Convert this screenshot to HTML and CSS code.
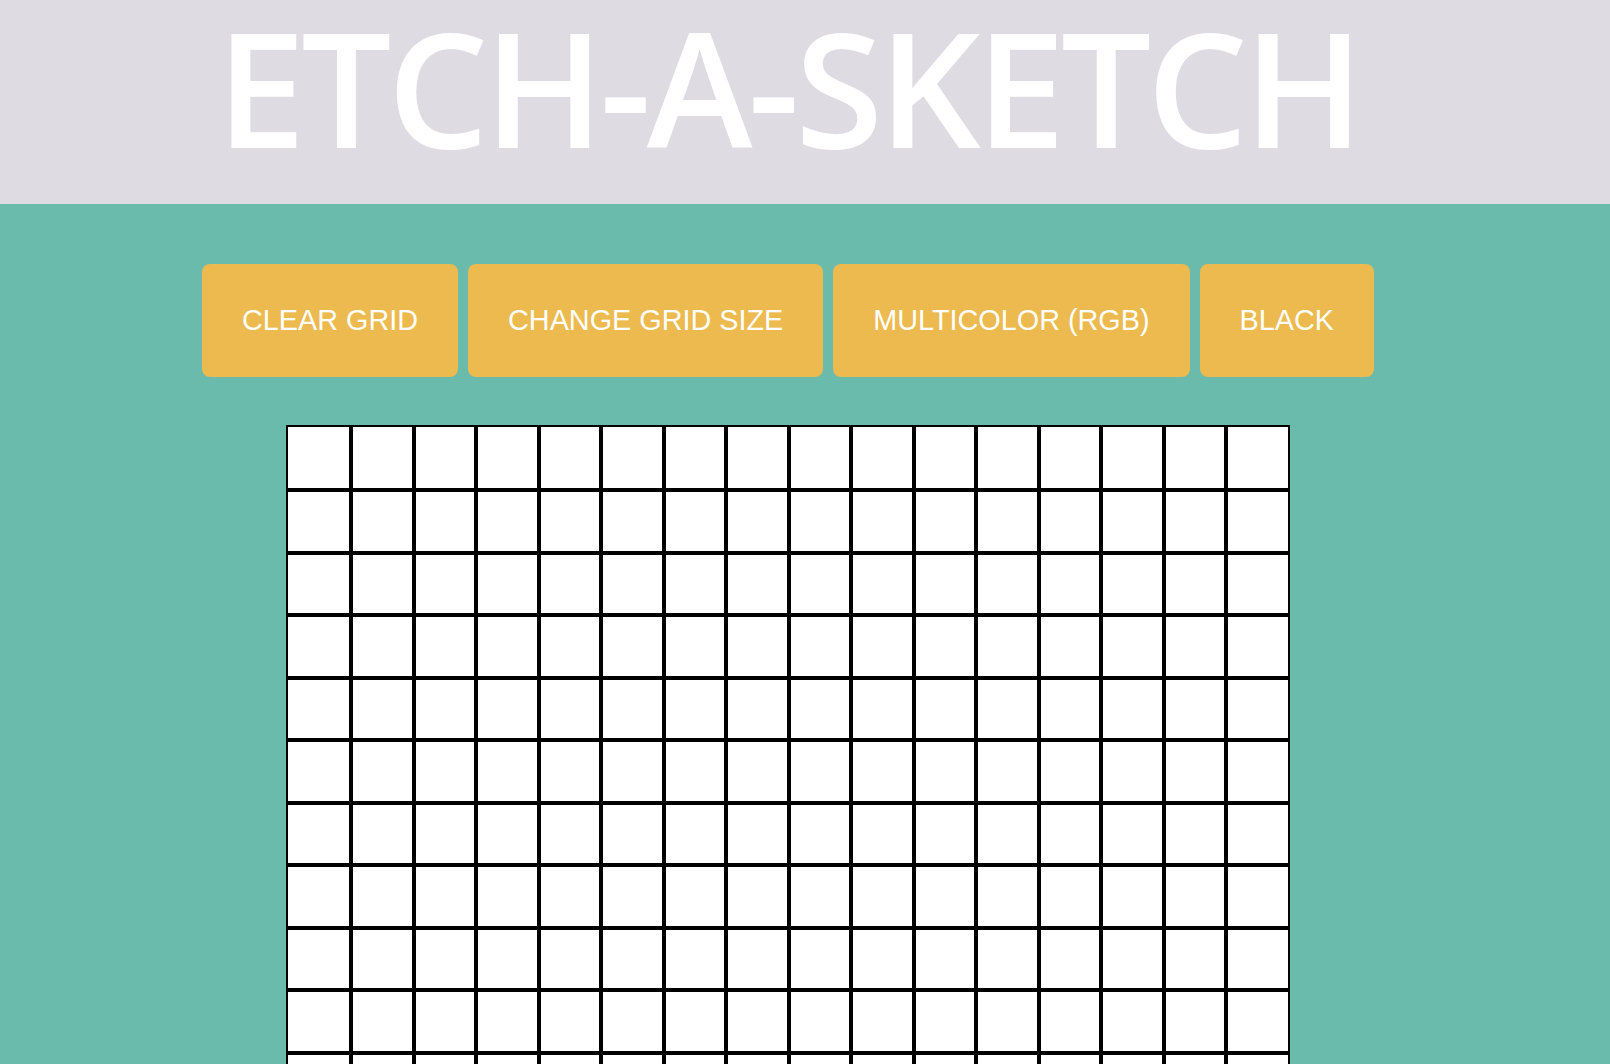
FILE: index.html
```html
<!DOCTYPE html>
<html lang="en">
<head>
<meta charset="utf-8">
<title>Etch-a-Sketch</title>
<link rel="stylesheet" href="styles.css">
</head>
<body>
<header class="header">
  <div class="wrap">
    <h1 class="title">ETCH-A-SKETCH</h1>
  </div>
</header>
<main class="main">
  <div class="wrap">
    <div class="controls">
      <button class="btn">CLEAR GRID</button>
      <button class="btn">CHANGE GRID SIZE</button>
      <button class="btn">MULTICOLOR (RGB)</button>
      <button class="btn">BLACK</button>
    </div>
    <div class="board">
<div class="cell"></div><div class="cell"></div><div class="cell"></div><div class="cell"></div><div class="cell"></div><div class="cell"></div><div class="cell"></div><div class="cell"></div><div class="cell"></div><div class="cell"></div><div class="cell"></div><div class="cell"></div><div class="cell"></div><div class="cell"></div><div class="cell"></div><div class="cell"></div>
<div class="cell"></div><div class="cell"></div><div class="cell"></div><div class="cell"></div><div class="cell"></div><div class="cell"></div><div class="cell"></div><div class="cell"></div><div class="cell"></div><div class="cell"></div><div class="cell"></div><div class="cell"></div><div class="cell"></div><div class="cell"></div><div class="cell"></div><div class="cell"></div>
<div class="cell"></div><div class="cell"></div><div class="cell"></div><div class="cell"></div><div class="cell"></div><div class="cell"></div><div class="cell"></div><div class="cell"></div><div class="cell"></div><div class="cell"></div><div class="cell"></div><div class="cell"></div><div class="cell"></div><div class="cell"></div><div class="cell"></div><div class="cell"></div>
<div class="cell"></div><div class="cell"></div><div class="cell"></div><div class="cell"></div><div class="cell"></div><div class="cell"></div><div class="cell"></div><div class="cell"></div><div class="cell"></div><div class="cell"></div><div class="cell"></div><div class="cell"></div><div class="cell"></div><div class="cell"></div><div class="cell"></div><div class="cell"></div>
<div class="cell"></div><div class="cell"></div><div class="cell"></div><div class="cell"></div><div class="cell"></div><div class="cell"></div><div class="cell"></div><div class="cell"></div><div class="cell"></div><div class="cell"></div><div class="cell"></div><div class="cell"></div><div class="cell"></div><div class="cell"></div><div class="cell"></div><div class="cell"></div>
<div class="cell"></div><div class="cell"></div><div class="cell"></div><div class="cell"></div><div class="cell"></div><div class="cell"></div><div class="cell"></div><div class="cell"></div><div class="cell"></div><div class="cell"></div><div class="cell"></div><div class="cell"></div><div class="cell"></div><div class="cell"></div><div class="cell"></div><div class="cell"></div>
<div class="cell"></div><div class="cell"></div><div class="cell"></div><div class="cell"></div><div class="cell"></div><div class="cell"></div><div class="cell"></div><div class="cell"></div><div class="cell"></div><div class="cell"></div><div class="cell"></div><div class="cell"></div><div class="cell"></div><div class="cell"></div><div class="cell"></div><div class="cell"></div>
<div class="cell"></div><div class="cell"></div><div class="cell"></div><div class="cell"></div><div class="cell"></div><div class="cell"></div><div class="cell"></div><div class="cell"></div><div class="cell"></div><div class="cell"></div><div class="cell"></div><div class="cell"></div><div class="cell"></div><div class="cell"></div><div class="cell"></div><div class="cell"></div>
<div class="cell"></div><div class="cell"></div><div class="cell"></div><div class="cell"></div><div class="cell"></div><div class="cell"></div><div class="cell"></div><div class="cell"></div><div class="cell"></div><div class="cell"></div><div class="cell"></div><div class="cell"></div><div class="cell"></div><div class="cell"></div><div class="cell"></div><div class="cell"></div>
<div class="cell"></div><div class="cell"></div><div class="cell"></div><div class="cell"></div><div class="cell"></div><div class="cell"></div><div class="cell"></div><div class="cell"></div><div class="cell"></div><div class="cell"></div><div class="cell"></div><div class="cell"></div><div class="cell"></div><div class="cell"></div><div class="cell"></div><div class="cell"></div>
<div class="cell"></div><div class="cell"></div><div class="cell"></div><div class="cell"></div><div class="cell"></div><div class="cell"></div><div class="cell"></div><div class="cell"></div><div class="cell"></div><div class="cell"></div><div class="cell"></div><div class="cell"></div><div class="cell"></div><div class="cell"></div><div class="cell"></div><div class="cell"></div>
<div class="cell"></div><div class="cell"></div><div class="cell"></div><div class="cell"></div><div class="cell"></div><div class="cell"></div><div class="cell"></div><div class="cell"></div><div class="cell"></div><div class="cell"></div><div class="cell"></div><div class="cell"></div><div class="cell"></div><div class="cell"></div><div class="cell"></div><div class="cell"></div>
<div class="cell"></div><div class="cell"></div><div class="cell"></div><div class="cell"></div><div class="cell"></div><div class="cell"></div><div class="cell"></div><div class="cell"></div><div class="cell"></div><div class="cell"></div><div class="cell"></div><div class="cell"></div><div class="cell"></div><div class="cell"></div><div class="cell"></div><div class="cell"></div>
<div class="cell"></div><div class="cell"></div><div class="cell"></div><div class="cell"></div><div class="cell"></div><div class="cell"></div><div class="cell"></div><div class="cell"></div><div class="cell"></div><div class="cell"></div><div class="cell"></div><div class="cell"></div><div class="cell"></div><div class="cell"></div><div class="cell"></div><div class="cell"></div>
<div class="cell"></div><div class="cell"></div><div class="cell"></div><div class="cell"></div><div class="cell"></div><div class="cell"></div><div class="cell"></div><div class="cell"></div><div class="cell"></div><div class="cell"></div><div class="cell"></div><div class="cell"></div><div class="cell"></div><div class="cell"></div><div class="cell"></div><div class="cell"></div>
<div class="cell"></div><div class="cell"></div><div class="cell"></div><div class="cell"></div><div class="cell"></div><div class="cell"></div><div class="cell"></div><div class="cell"></div><div class="cell"></div><div class="cell"></div><div class="cell"></div><div class="cell"></div><div class="cell"></div><div class="cell"></div><div class="cell"></div><div class="cell"></div>
    </div>
  </div>
</main>
</body>
</html>
```
FILE: styles.css
```css
html, body {
  margin: 0;
  padding: 0;
}

body {
  background: #6bbbad;
  font-family: "Liberation Sans", Arial, sans-serif;
  overflow: hidden;
}

.wrap {
  width: 1576px;
  display: flex;
  flex-direction: column;
  align-items: center;
}

.header {
  background: #dedce2;
  height: 204px;
}

.title {
  margin: 0;
  font-family: "Open Sans", "Lato", sans-serif;
  font-weight: 650;
  font-size: 160px;
  line-height: 172px;
  letter-spacing: -4.5px;
  color: #ffffff;
  white-space: nowrap;
}

.main {
  padding-top: 60px;
}

.controls {
  display: flex;
  gap: 10px;
}

.btn {
  height: 113px;
  padding: 0 40px;
  border: none;
  border-radius: 8px;
  background: #ecba4f;
  color: #ffffff;
  font-family: "Liberation Sans", Arial, sans-serif;
  font-size: 28.8px;
  line-height: 1;
  cursor: pointer;
}

.board {
  margin-top: 48px;
  width: 1004px;
  padding: 2px;
  box-sizing: border-box;
  display: grid;
  grid-template-columns: 61px repeat(14, 58.5px) 60px;
  grid-template-rows: 61px repeat(14, 58.5px) 60px;
  gap: 4px;
  background: #000000;
}

.cell {
  background: #ffffff;
}
```
